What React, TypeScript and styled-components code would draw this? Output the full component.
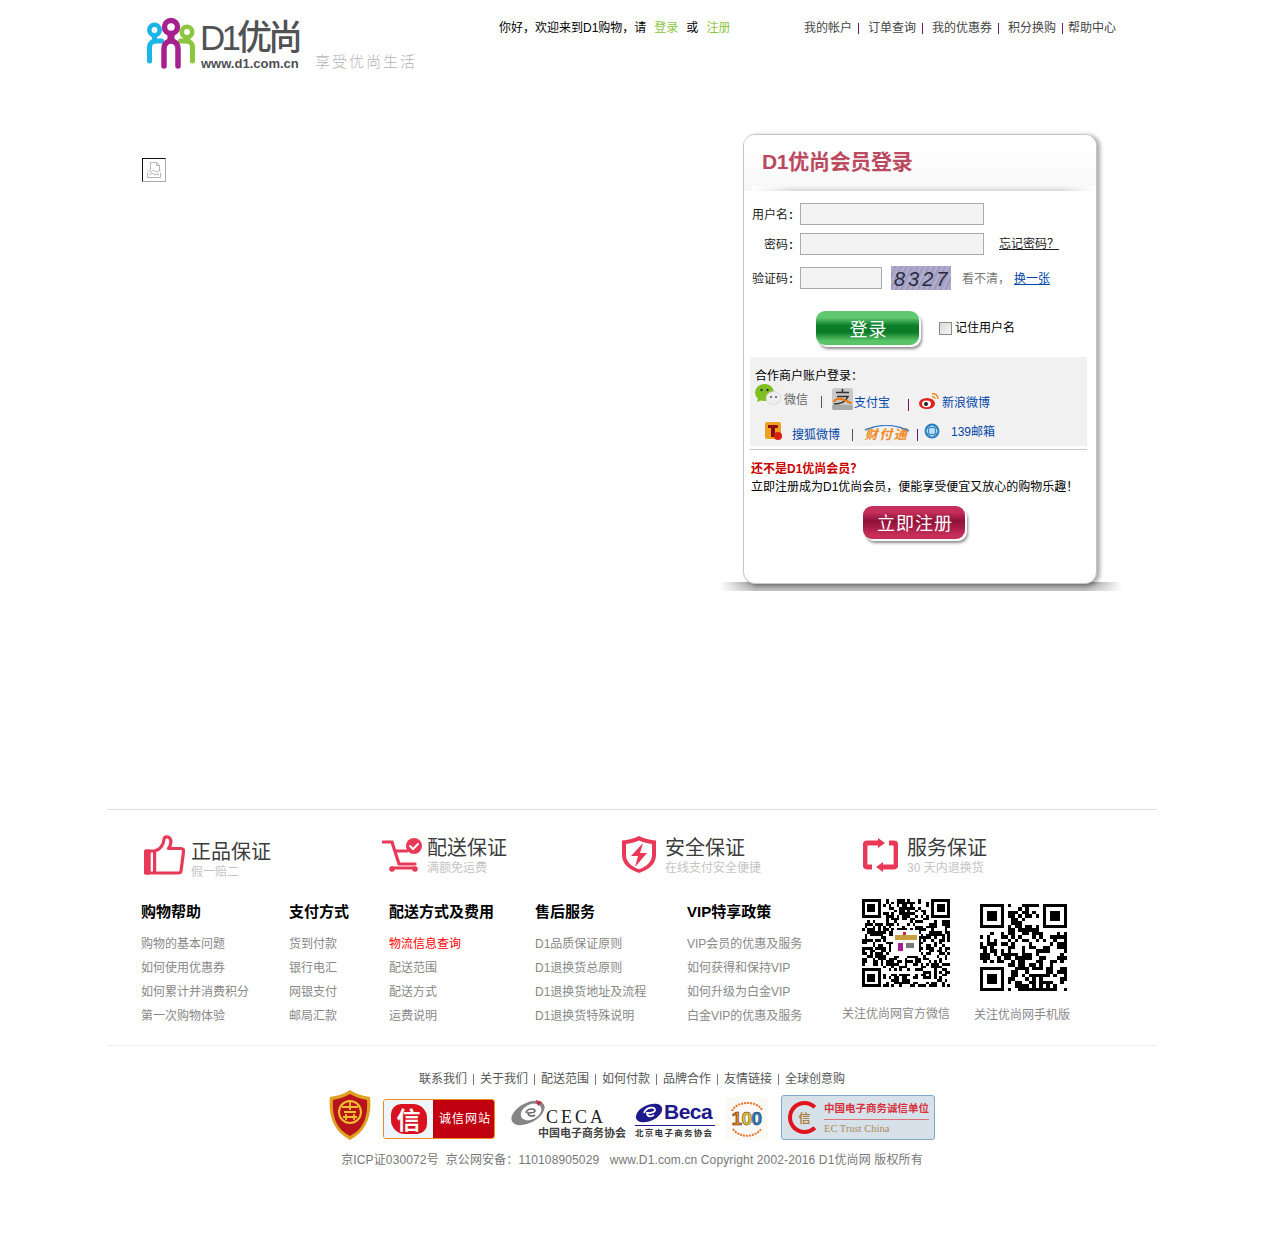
import React from "react";
import styled, { createGlobalStyle } from "styled-components";

const Global = createGlobalStyle`
  html, body { margin: 0; padding: 0; }
  body { font: 12px/14px "Liberation Sans", "Noto Sans CJK SC", sans-serif; color: #000; }
  a { text-decoration: none; color: inherit; }
`;

const Page = styled.div`
  width: 1050px;
  min-height: 1241px;
  margin-left: 107px;
`;

/* ---------- header ---------- */
const Header = styled.header`
  display: flex;
  align-items: flex-start;
  height: 134px;
  box-sizing: border-box;
  padding: 17px 0 0 39px;
`;
const LogoBlock = styled.div`
  display: flex;
  align-items: flex-start;
  width: 353px;
`;
const LogoWords = styled.div`
  display: flex;
  flex-direction: column;
  margin-left: 1px;
  width: 100px;
`;
const LogoName = styled.div`
  font-size: 35px;
  font-weight: 500;
  line-height: 36px;
  height: 36px;
  margin: 3px 0 0 -1px;
  letter-spacing: -3.9px;
  color: #505254;
  white-space: nowrap;
`;
const LogoUrl = styled.div`
  font-size: 13px;
  line-height: 14px;
  font-weight: 700;
  color: #4d4f52;
  margin-top: 1px;
  white-space: nowrap;
`;
const Slogan = styled.div`
  font-family: "Noto Sans CJK SC", sans-serif;
  font-weight: 300;
  font-size: 15px;
  line-height: 18px;
  letter-spacing: 2px;
  color: #b4b4b4;
  margin: 35px 0 0 14px;
  white-space: nowrap;
`;
const Greeting = styled.div`
  display: flex;
  width: 305px;
  margin-top: 4px;
  white-space: nowrap;
`;
const GreenLink = styled.a<{ $ml: number }>`
  color: #8cc63f;
  margin-left: ${(p) => p.$ml}px;
`;
const PlainWord = styled.span`
  margin-left: 8px;
`;
const AccountNav = styled.nav`
  display: flex;
  margin-top: 4px;
  color: #444;
  white-space: nowrap;
`;
const NavSep = styled.i<{ $w: number }>`
  width: 1px;
  height: 11px;
  margin: 2px ${(p) => p.$w}px 0 6px;
  background: #7a1468;
`;

/* ---------- main ---------- */
const Main = styled.main`
  display: flex;
  align-items: flex-start;
  height: 675px;
  padding-left: 35px;
`;
const BrokenImage = styled.div`
  width: 24px;
  height: 24px;
  box-sizing: border-box;
  margin-top: 24px;
  border: 1px solid;
  border-color: #111 #aaa #aaa #111;
  display: flex;
  align-items: center;
  justify-content: center;
`;
const Card = styled.section`
  position: relative;
  width: 354px;
  height: 450px;
  box-sizing: border-box;
  margin-left: 577px;
  background: #fff;
  border: 1px solid #c6c6c6;
  border-radius: 12px;
  box-shadow: 3px 1px 4px rgba(0, 0, 0, 0.35);
  &::before {
    content: "";
    position: absolute;
    z-index: -1;
    left: -24px;
    right: -26px;
    bottom: -8px;
    height: 9px;
    background:
      linear-gradient(90deg, #fff, rgba(255, 255, 255, 0) 9%, rgba(255, 255, 255, 0) 91%, #fff),
      linear-gradient(#8e8e8e, #c4c4c4);
  }
`;
const CardHead = styled.div`
  position: relative;
  height: 56px;
  box-sizing: border-box;
  padding: 14px 0 0 18px;
  border-radius: 11px 11px 0 0;
  background: linear-gradient(#fff 25%, #f7f7f7);
  &::after {
    content: "";
    position: absolute;
    left: 8px;
    right: 0;
    bottom: 0;
    height: 5px;
    background:
      linear-gradient(90deg, #fff, rgba(255, 255, 255, 0) 12%, rgba(255, 255, 255, 0) 90%, #fff),
      linear-gradient(#f5f5f5, #d9d9d9);
  }
`;
const CardTitle = styled.h1`
  margin: 0;
  font-size: 21px;
  line-height: 26px;
  font-weight: 700;
  letter-spacing: -0.3px;
  color: #bb4a60;
`;
const FormBody = styled.div`
  padding-top: 12px;
`;
const FormRow = styled.div<{ $mt?: number }>`
  display: flex;
  align-items: center;
  margin-top: ${(p) => p.$mt || 0}px;
`;
const FieldLabel = styled.label`
  width: 49px;
  margin-right: 7px;
  padding-top: 2px;
  text-align: right;
  color: #222;
  white-space: nowrap;
`;
const Colon = styled.b`
  margin-left: 1px;
`;
const TextField = styled.div<{ $w: number }>`
  width: ${(p) => p.$w}px;
  height: 22px;
  box-sizing: border-box;
  background: #f3f3f3;
  border: 1px solid #aaa;
`;
const Forgot = styled.a`
  margin-left: 15px;
  color: #222;
  text-decoration: underline;
`;
const Captcha = styled.div`
  width: 60px;
  height: 24px;
  margin-left: 9px;
  background: repeating-linear-gradient(115deg, #aaa6c8 0 2px, #b8b5d2 2px 3px, #a09cc0 3px 5px);
  font: italic 20px/26px "Liberation Sans", sans-serif;
  letter-spacing: 3px;
  padding-left: 3px;
  box-sizing: border-box;
  color: #2a2a40;
  overflow: hidden;
`;
const Muted = styled.span`
  color: #777;
  margin-left: 11px;
  padding-top: 1px;
`;
const BlueLink = styled.a`
  color: #0046a8;
  text-decoration: underline;
  margin-left: 4px;
  padding-top: 1px;
`;
const LoginRow = styled.div`
  display: flex;
  align-items: center;
  margin-top: 21px;
  padding-left: 72px;
`;
const GlossButton = styled.button<{ $tone: "green" | "red"; $h: number; $w: number }>`
  width: ${(p) => p.$w}px;
  height: ${(p) => p.$h}px;
  border: 0;
  padding: 0 0 0 2px;
  border-radius: 9px;
  color: #fff;
  font: 400 18px/${(p) => p.$h}px "Noto Sans CJK SC", sans-serif;
  letter-spacing: 1px;
  box-shadow: 2px 2px 0 #fff, 3px 4px 3px rgba(0, 0, 0, 0.45);
  background: ${(p) =>
    p.$tone === "green"
      ? "linear-gradient(#61c770 0 20%, #0d7f2a 42%, #0b7825 62%, #5ac568 88%)"
      : "linear-gradient(#c62f5b 0 18%, #8e1239 45%, #a31a45 62%, #c72e5a 88%)"};
`;
const RememberBox = styled.span`
  width: 11px;
  height: 11px;
  margin-left: 20px;
  border: 1px solid #8a8a8a;
  background: linear-gradient(135deg, #d8d8d8, #f6f6f6);
`;
const RememberText = styled.span`
  margin-left: 3px;
`;
const PartnerPanel = styled.div`
  margin: 12px 0 0 6px;
  width: 337px;
  height: 89px;
  box-sizing: border-box;
  padding-top: 12px;
  background: #f1f1f1;
`;
const PartnerTitle = styled.div`
  padding-left: 5px;
`;
const PartnerRow = styled.div<{ $pl: number; $h: number; $mt: number }>`
  display: flex;
  align-items: flex-start;
  height: ${(p) => p.$h}px;
  margin-top: ${(p) => p.$mt}px;
  padding-left: ${(p) => p.$pl}px;
`;
const Spot = styled.div<{ $ml?: number; $mt?: number; $w?: number }>`
  margin-left: ${(p) => p.$ml || 0}px;
  margin-top: ${(p) => p.$mt || 0}px;
  ${(p) => (p.$w ? `width:${p.$w}px;` : "")}
  line-height: 14px;
  white-space: nowrap;
  & > svg { display: block; }
`;
const PartnerText = styled(Spot)<{ $gray?: boolean }>`
  padding-top: 1px;
  color: ${(p) => (p.$gray ? "#666" : "#0046a8")};
`;
const PartnerSep = styled.i<{ $ml: number; $mt: number; $c: string }>`
  display: block;
  width: 1px;
  height: 12px;
  margin: ${(p) => p.$mt}px 0 0 ${(p) => p.$ml}px;
  background: ${(p) => p.$c};
`;
const TenpayMark = styled(Spot)`
  position: relative;
  width: 47px;
  height: 16px;
  font: italic 700 13px/17px "Noto Sans CJK SC", sans-serif;
  letter-spacing: 1.5px;
  color: #f08a24;
  text-align: center;
  & > svg { position: absolute; left: 0; top: 0; }
`;
const PanelRule = styled.hr`
  margin: 3px 0 0 6px;
  width: 337px;
  height: 1px;
  border: 0;
  background: #c8c8c8;
`;
const JoinTitle = styled.div`
  margin: 12px 0 0 7px;
  font-weight: 700;
  color: #c00;
`;
const JoinText = styled.div`
  margin: 4px 0 0 7px;
  white-space: nowrap;
`;
const JoinAction = styled.div`
  margin-top: 12px;
  padding-left: 119px;
`;

/* ---------- footer ---------- */
const Footer = styled.footer`
  border-top: 1px solid #dedede;
`;
const GuaranteeRow = styled.div`
  display: flex;
  align-items: flex-start;
  height: 89px;
  box-sizing: border-box;
  padding: 25px 0 0 37px;
`;
const Guarantee = styled.div<{ $w: number }>`
  display: flex;
  align-items: flex-start;
  width: ${(p) => p.$w}px;
`;
const GuaranteeIcon = styled.svg<{ $mt: number }>`
  flex: none;
  margin-top: ${(p) => p.$mt}px;
`;
const GuaranteeText = styled.div<{ $ml: number; $mt?: number }>`
  margin-left: ${(p) => p.$ml}px;
  margin-top: ${(p) => p.$mt || 0}px;
`;
const GuaranteeTitle = styled.div`
  font-size: 20px;
  line-height: 24px;
  color: #3c3c3c;
  white-space: nowrap;
  padding-top: 1px;
`;
const GuaranteeSub = styled.div`
  font-size: 12px;
  line-height: 16px;
  color: #c4c4c4;
  white-space: nowrap;
`;
const HelpRow = styled.div`
  display: flex;
  align-items: flex-start;
  height: 147px;
  box-sizing: border-box;
  padding-left: 34px;
  border-bottom: 1px solid #eee;
`;
const HelpColumn = styled.div<{ $w: number }>`
  width: ${(p) => p.$w}px;
  padding-top: 5px;
  flex: none;
`;
const HelpHead = styled.h3`
  margin: 0 0 12px;
  font-size: 15px;
  line-height: 16px;
  font-weight: 700;
  color: #000;
  white-space: nowrap;
`;
const HelpLink = styled.a<{ $hot?: boolean }>`
  display: block;
  line-height: 24px;
  color: ${(p) => (p.$hot ? "#f00" : "#888")};
  white-space: nowrap;
`;
const QrBlock = styled.div<{ $w: number; $qrLeft: number; $top: number; $gap: number }>`
  width: ${(p) => p.$w}px;
  flex: none;
  padding-top: ${(p) => p.$top}px;
  & > svg { display: block; margin: 0 0 ${(p) => p.$gap}px ${(p) => p.$qrLeft}px; }
`;
const QrCaption = styled.div`
  color: #888;
  white-space: nowrap;
`;
const LinkRow = styled.nav`
  display: flex;
  justify-content: center;
  margin-top: 26px;
  color: #555;
`;
const LinkSep = styled.i`
  width: 1px;
  height: 11px;
  margin: 2px 6px 0;
  background: #777;
`;
const BadgeRow = styled.div`
  display: flex;
  justify-content: center;
  align-items: flex-end;
  height: 50px;
  margin-top: 4px;
`;
const BadgeSvg = styled.svg<{ $ml?: number }>`
  flex: none;
  display: block;
  margin-left: ${(p) => p.$ml || 0}px;
`;
const TrustBadge = styled.div`
  display: flex;
  width: 112px;
  height: 40px;
  box-sizing: border-box;
  margin: 0 0 1px 12px;
  border: 1px solid #f08a24;
  border-radius: 3px;
  overflow: hidden;
`;
const TrustLeft = styled.div`
  width: 49px;
  background: #eef5fb;
  display: flex;
  align-items: center;
  justify-content: center;
`;
const TrustMark = styled.div`
  width: 36px;
  height: 30px;
  border-radius: 10px 14px 10px 14px;
  background: #d8121f;
  color: #fff;
  text-align: center;
  font: 700 24px/30px "Noto Sans CJK SC", sans-serif;
`;
const TrustRight = styled.div`
  flex: 1;
  background: #c00010;
  color: #fff;
  font-size: 12px;
  line-height: 38px;
  padding-left: 3px;
  text-align: center;
  letter-spacing: 1px;
  white-space: nowrap;
`;
const Association = styled.div<{ $w: number; $ml: number }>`
  width: ${(p) => p.$w}px;
  margin-left: ${(p) => p.$ml}px;
  flex: none;
`;
const CecaTop = styled.div`
  display: flex;
  align-items: flex-end;
  height: 27px;
`;
const CecaWord = styled.span`
  font: 18px/18px "Liberation Serif", serif;
  letter-spacing: 3px;
  color: #222;
  margin-left: -1px;
`;
const CecaCn = styled.div`
  font-size: 11px;
  line-height: 14px;
  font-weight: 700;
  color: #444;
  text-align: right;
  white-space: nowrap;
`;
const BecaTop = styled.div`
  display: flex;
  align-items: center;
  height: 26px;
  border-bottom: 1px solid #1c1a8c;
`;
const BecaWord = styled.span`
  font: 700 21px/24px "Liberation Sans", sans-serif;
  color: #1c1a8c;
  letter-spacing: -0.5px;
  margin-left: 1px;
`;
const BecaCn = styled.div`
  font-size: 8.5px;
  line-height: 14px;
  font-weight: 700;
  letter-spacing: 1.3px;
  color: #333;
  white-space: nowrap;
`;
const HundredBadge = styled.div`
  position: relative;
  width: 43px;
  height: 43px;
  margin-left: 10px;
  flex: none;
  background: #fbfaf6;
  border-radius: 4px;
  font: 900 19px/43px "Liberation Sans", sans-serif;
  letter-spacing: -0.5px;
  text-align: center;
  -webkit-text-stroke: 0.5px #222;
  & > svg { position: absolute; left: 0; top: 0; }
`;
const HundredDigit = styled.span<{ $c: string }>`
  position: relative;
  color: ${(p) => p.$c};
`;
const EcBadge = styled.div`
  display: flex;
  width: 154px;
  height: 45px;
  box-sizing: border-box;
  margin-left: 13px;
  flex: none;
  background: #d6e1ea;
  border: 1px solid #7fa9cb;
  border-radius: 3px;
  padding: 5px 0 0 6px;
`;
const EcRing = styled.div`
  width: 34px;
  height: 33px;
  box-sizing: border-box;
  border: 4px solid #e0141c;
  border-right-color: transparent;
  border-radius: 50%;
  color: #b08040;
  font: 700 12px/25px "Noto Sans CJK SC", sans-serif;
  text-align: center;
`;
const EcText = styled.div`
  margin-left: 3px;
  flex: 1;
  padding-right: 5px;
`;
const EcCn = styled.div`
  font-size: 10.5px;
  line-height: 15px;
  font-weight: 700;
  color: #d8323c;
  white-space: nowrap;
  border-bottom: 1px solid #e0707a;
  padding-bottom: 3px;
`;
const EcEn = styled.div`
  font: 10.5px/14px "Liberation Serif", serif;
  color: #b08a58;
  margin-top: 2px;
`;
const Copyright = styled.div`
  margin-top: 13px;
  text-align: center;
  color: #777;
  letter-spacing: 0.13px;
  white-space: pre;
`;

/* ---------- drawings ---------- */
const LogoMark = () => (
  <svg width="54" height="54" viewBox="0 0 54 54" fill="none" strokeLinecap="round">
    <circle cx="8.500" cy="13" r="5.200" stroke="#1cb5e8" strokeWidth="4.600" />
    <path d="M3.500 44V30a6 6 0 0 1 6-6h6" stroke="#1cb5e8" strokeWidth="5" />
    <path d="M8.500 19v5" stroke="#1cb5e8" strokeWidth="5" />
    <circle cx="41" cy="15" r="5.200" stroke="#8cc63f" strokeWidth="4.600" />
    <path d="M46.500 44V30a6 6 0 0 0-6-6h-6" stroke="#8cc63f" strokeWidth="5" />
    <path d="M41 21v3" stroke="#8cc63f" strokeWidth="5" />
    <circle cx="25" cy="10" r="6.500" stroke="#a6208e" strokeWidth="5.500" />
    <path d="M18 49V31a7 7 0 0 1 14 0v18" stroke="#a6208e" strokeWidth="5.500" />
    <path d="M25 18v5" stroke="#a6208e" strokeWidth="7" />
  </svg>
);

const BrokenGlyph = () => (
  <svg width="14" height="16" viewBox="0 0 14 16" fill="none" stroke="#b5b5b5">
    <path d="M3.500 8V.5h6l3 3V8M9.500.5v3h3" />
    <path d="M.5 8l3 2 3-2 3 2 4-2M.5 10.500v5h13v-5" />
    <path d="M2 13l3-2 3 2 2-1 2 1" />
  </svg>
);

const Wechat = () => (
  <svg width="26" height="22" viewBox="0 0 26 22">
    <ellipse cx="9.500" cy="8.500" rx="9.500" ry="8.500" fill="#7fbf1e" />
    <path d="M3 14l-1 4 5-2z" fill="#7fbf1e" />
    <circle cx="6.500" cy="6" r="1.200" fill="#234" />
    <circle cx="12.500" cy="6" r="1.200" fill="#234" />
    <ellipse cx="18.500" cy="14" rx="7.500" ry="6.500" fill="#eeeeee" stroke="#ccc" strokeWidth=".6" />
    <circle cx="16" cy="13" r="1" fill="#555" />
    <circle cx="21" cy="13" r="1" fill="#555" />
  </svg>
);
const Alipay = () => (
  <svg width="21" height="22" viewBox="0 0 21 22">
    <rect width="21" height="22" rx="3" fill="#c9c9c9" />
    <rect y="17" width="21" height="5" rx="2" fill="#a9a9a9" />
    <path d="M4 4.500h13M10.500 1v4M5 8.500h11C14 13 9 16 2 16" fill="none" stroke="#333" strokeWidth="1.600" />
    <path d="M1.500 14c3-5 8-4 18 1.500" fill="none" stroke="#ee7a10" strokeWidth="2" />
  </svg>
);
const Weibo = () => (
  <svg width="20" height="16" viewBox="0 0 20 16">
    <ellipse cx="8" cy="10.500" rx="8" ry="5.500" fill="#dd2222" />
    <ellipse cx="7.500" cy="10.800" rx="4.500" ry="3.400" fill="#fff" />
    <circle cx="7" cy="11" r="2" fill="#222" />
    <path d="M13 1c3-1 6 1 6 5M13 4c2-.5 3 .5 3 2" fill="none" stroke="#f08a24" strokeWidth="1.500" />
  </svg>
);
const Sohu = () => (
  <svg width="18" height="18" viewBox="0 0 18 18">
    <rect width="16" height="17" rx="2" fill="#f0a020" />
    <path d="M3 3h10v3H10v9H6V6H3z" fill="#8a1010" />
    <circle cx="13" cy="14" r="4" fill="#d82010" />
  </svg>
);
const TenpaySwoosh = () => (
  <svg width="47" height="16" viewBox="0 0 47 16" fill="none">
    <path d="M2 5C16 -1 32 -1 46 6" stroke="#3b7fc4" strokeWidth="1.400" />
  </svg>
);
const Mobile139 = () => (
  <svg width="16" height="16" viewBox="0 0 16 16" fill="none">
    <circle cx="8" cy="8" r="7.500" fill="#2a7fc0" />
    <circle cx="8" cy="8" r="5.500" fill="#bcdcf2" />
    <path d="M3 6c3-2 7-2 10 0M3 10c3 2 7 2 10 0M6 3c-2 3-2 7 0 10M10 3c2 3 2 7 0 10" stroke="#2a7fc0" />
  </svg>
);

const Thumb = () => (
  <GuaranteeIcon $mt={0} width="41" height="40" viewBox="0 0 41 40" fill="none" stroke="#e83a58" strokeWidth="3.200" strokeLinejoin="round">
    <rect x="1.600" y="16" width="9" height="22" rx="1" />
    <path d="M1.600 16h3.500v22H1.600z" fill="#e83a58" />
    <path d="M10.600 16c5-1 9-6 9.400-11.500C20.200 1.500 24 .8 26 3.500c1.800 3 .5 7-1.500 10H37c2 0 2.800 1.500 2.500 3.500L37 36c-.3 1.300-1 2-2.500 2H10.600" />
  </GuaranteeIcon>
);
const Cart = () => (
  <GuaranteeIcon $mt={2} width="40" height="36" viewBox="0 0 40 36" fill="none" stroke="#e83a58" strokeWidth="3.200" strokeLinecap="round">
    <path d="M1 5h9l7 22h16M13 14h12M10 31h22" />
    <circle cx="10" cy="32" r="2.800" fill="#e83a58" stroke="none" />
    <circle cx="33" cy="32" r="2.800" fill="#e83a58" stroke="none" />
    <circle cx="32" cy="9" r="8" fill="#e83a58" stroke="none" />
    <path d="M28 9l3 3 5-5" stroke="#fff" strokeWidth="2" />
  </GuaranteeIcon>
);
const Shield = () => (
  <GuaranteeIcon $mt={1} width="34" height="37" viewBox="0 0 34 37">
    <path d="M17 0c5 2.500 11 4 17 4.500V19c0 9-7 14.500-17 18C7 33.500 0 28 0 19V4.500C6 4 12 2.500 17 0z" fill="#e83a58" />
    <path d="M17 4.500c4 1.800 9 3 13 3.500v11c0 7-5.500 11.500-13 14.300C9.500 30.500 4 26 4 19V8c4-.5 9-1.700 13-3.500z" fill="#fff" />
    <path d="M21 7L9 20h7l-3 11 12-14h-7z" fill="#e83a58" />
  </GuaranteeIcon>
);
const Service = () => (
  <GuaranteeIcon $mt={3} width="35" height="34" viewBox="0 0 35 34">
    <path d="M15 5H4Q2 5 2 7.500v19Q2 29 4 29h5" fill="none" stroke="#e83a58" strokeWidth="4.800" />
    <path d="M20 29h11q2 0 2-2.500v-19Q33 5 31 5h-5" fill="none" stroke="#e83a58" strokeWidth="4.800" />
    <path d="M15 0l7 5-7 5zM20 24l-7 5 7 5z" fill="#e83a58" />
  </GuaranteeIcon>
);

/* Module pattern is derived from a small generator so both codes stay stable between renders. */
const QrCode = ({ n, px, seed, logo }: { n: number; px: number; seed: number; logo?: boolean }) => {
  let s = seed;
  const rnd = () => {
    s = (s * 1103515245 + 12345) & 0x7fffffff;
    return (s >> 16) & 1;
  };
  const inFinder = (x: number, y: number) =>
    (x < 8 && y < 8) || (x >= n - 8 && y < 8) || (x < 8 && y >= n - 8);
  const cells: string[] = [];
  for (let y = 0; y < n; y++)
    for (let x = 0; x < n; x++) {
      const on = rnd();
      if (on && !inFinder(x, y)) cells.push(`M${x} ${y}h1v1h-1z`);
    }
  const finder = (x: number, y: number) =>
    `M${x} ${y}h7v7h-7zM${x + 1} ${y + 1}v5h5v-5zM${x + 2} ${y + 2}h3v3h-3z`;
  const c = (n - 8) / 2;
  return (
    <svg width={px} height={px} viewBox={`0 0 ${n} ${n}`} shapeRendering="crispEdges">
      <path d={cells.join("")} fill="#000" />
      <path d={finder(0, 0) + finder(n - 7, 0) + finder(0, n - 7)} fill="#000" fillRule="evenodd" />
      {logo && (
        <g>
          <rect x={c - 1} y={c - 1} width="10" height="10" fill="#fff" />
          <rect x={c} y={c + 1} width="8" height="2" fill="#c9a040" />
          <rect x={c + 1} y={c + 4} width="2" height="3" fill="#a6208e" />
          <rect x={c + 4} y={c + 4} width="3" height="2" fill="#777" />
          <rect x={c + 3} y={c} width="1" height="1" fill="#c8283c" />
        </g>
      )}
    </svg>
  );
};

const GoldShield = () => (
  <BadgeSvg width="42" height="50" viewBox="0 0 42 50">
    <path d="M21 0c6 4 13 6 20 7 2 18-3 34-20 43C4 41-1 25 1 7c7-1 14-3 20-7z" fill="#e0a020" />
    <path d="M21 4c5 3 11 5 17 6 1 16-3 29-17 36C7 39 3 26 4 10c6-1 12-3 17-6z" fill="#b8141c" />
    <circle cx="21" cy="22" r="11" fill="none" stroke="#f0c030" strokeWidth="2" />
    <path d="M13 17h16M21 12v8M15 22h12M14 27h14M17 24v6M25 24v6" stroke="#f0c030" strokeWidth="1.800" fill="none" />
  </BadgeSvg>
);
const CecaSwirl = () => (
  <svg width="37" height="27" viewBox="0 0 37 27">
    <ellipse cx="18" cy="14" rx="18" ry="10" transform="rotate(-28 18 14)" fill="#858585" />
    <ellipse cx="21" cy="13" rx="11" ry="7.500" transform="rotate(-28 21 13)" fill="#fff" />
    <path d="M16 14c1-5 9-5 9-2 0 2-5 2-7 2 0 3 4 4 7 2" fill="none" stroke="#666" strokeWidth="1.600" />
    <path d="M26 1l6 2-4 4z" fill="#c8283c" />
  </svg>
);
const BecaSwirl = () => (
  <svg width="28" height="25" viewBox="0 0 28 25">
    <ellipse cx="14" cy="13" rx="14" ry="8" transform="rotate(-25 14 13)" fill="#1c1a8c" />
    <path d="M9 13c2-6 11-7 11-3 0 3-7 3-8 3 0 4 4 4 7 2" fill="none" stroke="#fff" strokeWidth="1.800" />
  </svg>
);
const HundredArc = () => (
  <svg width="43" height="43" viewBox="0 0 43 43" fill="none">
    <path d="M7 14C11 4 32 3 37 13M8 32c6 9 22 9 28 0" stroke="#e8702a" strokeWidth="2" strokeDasharray="2 1" />
  </svg>
);

const colA = ["购物的基本问题", "如何使用优惠券", "如何累计并消费积分", "第一次购物体验"];
const colB = ["货到付款", "银行电汇", "网银支付", "邮局汇款"];
const colC = ["物流信息查询", "配送范围", "配送方式", "运费说明"];
const colD = ["D1品质保证原则", "D1退换货总原则", "D1退换货地址及流程", "D1退换货特殊说明"];
const colE = ["VIP会员的优惠及服务", "如何获得和保持VIP", "如何升级为白金VIP", "白金VIP的优惠及服务"];
const bottomLinks = ["联系我们", "关于我们", "配送范围", "如何付款", "品牌合作", "友情链接", "全球创意购"];

const HelpCol = ({ w, head, items, hot }: { w: number; head: string; items: string[]; hot?: number }) => (
  <HelpColumn $w={w}>
    <HelpHead>{head}</HelpHead>
    {items.map((t, i) => (
      <HelpLink key={t} $hot={hot === i}>
        {t}
      </HelpLink>
    ))}
  </HelpColumn>
);

export default function App() {
  return (
    <Page>
      <Global />
      <Header>
        <LogoBlock>
          <LogoMark />
          <LogoWords>
            <LogoName>D1优尚</LogoName>
            <LogoUrl>www.d1.com.cn</LogoUrl>
          </LogoWords>
          <Slogan>享受优尚生活</Slogan>
        </LogoBlock>
        <Greeting>
          你好，欢迎来到D1购物，请
          <GreenLink $ml={8}>登录</GreenLink>
          <PlainWord>或</PlainWord>
          <GreenLink $ml={8}>注册</GreenLink>
        </Greeting>
        <AccountNav>
          我的帐户<NavSep $w={9} />
          订单查询<NavSep $w={9} />
          我的优惠券<NavSep $w={9} />
          积分换购<NavSep $w={5} />
          帮助中心
        </AccountNav>
      </Header>

      <Main>
        <BrokenImage>
          <BrokenGlyph />
        </BrokenImage>
        <Card>
          <CardHead>
            <CardTitle>D1优尚会员登录</CardTitle>
          </CardHead>
          <FormBody>
            <FormRow>
              <FieldLabel>用户名<Colon>:</Colon></FieldLabel>
              <TextField $w={184} />
            </FormRow>
            <FormRow $mt={8}>
              <FieldLabel>密码<Colon>:</Colon></FieldLabel>
              <TextField $w={184} />
              <Forgot>忘记密码？</Forgot>
            </FormRow>
            <FormRow $mt={11}>
              <FieldLabel>验证码<Colon>:</Colon></FieldLabel>
              <TextField $w={82} />
              <Captcha>8327</Captcha>
              <Muted>看不清，</Muted>
              <BlueLink>换一张</BlueLink>
            </FormRow>
            <LoginRow>
              <GlossButton $tone="green" $w={103} $h={34}>登录</GlossButton>
              <RememberBox />
              <RememberText>记住用户名</RememberText>
            </LoginRow>
          </FormBody>
          <PartnerPanel>
            <PartnerTitle>合作商户账户登录：</PartnerTitle>
            <PartnerRow $pl={5} $h={26} $mt={1}>
              <Spot><Wechat /></Spot>
              <PartnerText $gray $ml={3} $mt={8}>微信</PartnerText>
              <PartnerSep $ml={13} $mt={12} $c="#555" />
              <Spot $ml={10} $mt={4}><Alipay /></Spot>
              <PartnerText $ml={1} $mt={11}>支付宝</PartnerText>
              <PartnerSep $ml={18} $mt={15} $c="#7a1468" />
              <Spot $ml={10} $mt={9}><Weibo /></Spot>
              <PartnerText $ml={3} $mt={11}>新浪微博</PartnerText>
            </PartnerRow>
            <PartnerRow $pl={15} $h={22} $mt={10}>
              <Spot $mt={2}><Sohu /></Spot>
              <PartnerText $ml={9} $mt={7}>搜狐微博</PartnerText>
              <PartnerSep $ml={12} $mt={9} $c="#555" />
              <TenpayMark $ml={10} $mt={5}><TenpaySwoosh />财付通</TenpayMark>
              <PartnerSep $ml={7} $mt={9} $c="#7a1468" />
              <Spot $ml={6} $mt={3}><Mobile139 /></Spot>
              <PartnerText $ml={11} $mt={4}>139邮箱</PartnerText>
            </PartnerRow>
          </PartnerPanel>
          <PanelRule />
          <JoinTitle>还不是D1优尚会员？</JoinTitle>
          <JoinText>立即注册成为D1优尚会员，便能享受便宜又放心的购物乐趣！</JoinText>
          <JoinAction>
            <GlossButton $tone="red" $w={102} $h={33}>立即注册</GlossButton>
          </JoinAction>
        </Card>
      </Main>

      <Footer>
        <GuaranteeRow>
          <Guarantee $w={238}>
            <Thumb />
            <GuaranteeText $ml={6} $mt={4}>
              <GuaranteeTitle>正品保证</GuaranteeTitle>
              <GuaranteeSub>假一赔二</GuaranteeSub>
            </GuaranteeText>
          </Guarantee>
          <Guarantee $w={240}>
            <Cart />
            <GuaranteeText $ml={5}>
              <GuaranteeTitle>配送保证</GuaranteeTitle>
              <GuaranteeSub>满额免运费</GuaranteeSub>
            </GuaranteeText>
          </Guarantee>
          <Guarantee $w={241}>
            <Shield />
            <GuaranteeText $ml={9}>
              <GuaranteeTitle>安全保证</GuaranteeTitle>
              <GuaranteeSub>在线支付安全便捷</GuaranteeSub>
            </GuaranteeText>
          </Guarantee>
          <Guarantee $w={200}>
            <Service />
            <GuaranteeText $ml={9}>
              <GuaranteeTitle>服务保证</GuaranteeTitle>
              <GuaranteeSub>30 天内退换货</GuaranteeSub>
            </GuaranteeText>
          </Guarantee>
        </GuaranteeRow>

        <HelpRow>
          <HelpCol w={148} head="购物帮助" items={colA} />
          <HelpCol w={100} head="支付方式" items={colB} />
          <HelpCol w={146} head="配送方式及费用" items={colC} hot={0} />
          <HelpCol w={152} head="售后服务" items={colD} />
          <HelpCol w={155} head="VIP特享政策" items={colE} />
          <QrBlock $w={132} $qrLeft={20} $top={0} $gap={20}>
            <QrCode n={33} px={88} seed={77} logo />
            <QrCaption>关注优尚网官方微信</QrCaption>
          </QrBlock>
          <QrBlock $w={100} $qrLeft={6} $top={5} $gap={17}>
            <QrCode n={25} px={87} seed={4242} />
            <QrCaption>关注优尚网手机版</QrCaption>
          </QrBlock>
        </HelpRow>

        <LinkRow>
          {bottomLinks.map((t, i) => (
            <React.Fragment key={t}>
              {i > 0 && <LinkSep />}
              <a>{t}</a>
            </React.Fragment>
          ))}
        </LinkRow>

        <BadgeRow>
          <GoldShield />
          <TrustBadge>
            <TrustLeft>
              <TrustMark>信</TrustMark>
            </TrustLeft>
            <TrustRight>诚信网站</TrustRight>
          </TrustBadge>
          <Association $w={116} $ml={15}>
            <CecaTop>
              <CecaSwirl />
              <CecaWord>CECA</CecaWord>
            </CecaTop>
            <CecaCn>中国电子商务协会</CecaCn>
          </Association>
          <Association $w={80} $ml={9}>
            <BecaTop>
              <BecaSwirl />
              <BecaWord>Beca</BecaWord>
            </BecaTop>
            <BecaCn>北京电子商务协会</BecaCn>
          </Association>
          <HundredBadge>
            <HundredArc />
            <HundredDigit $c="#f08020">1</HundredDigit>
            <HundredDigit $c="#f6c820">0</HundredDigit>
            <HundredDigit $c="#2a80d0">0</HundredDigit>
          </HundredBadge>
          <EcBadge>
            <EcRing>信</EcRing>
            <EcText>
              <EcCn>中国电子商务诚信单位</EcCn>
              <EcEn>EC Trust China</EcEn>
            </EcText>
          </EcBadge>
        </BadgeRow>

        <Copyright>京ICP证030072号  京公网安备：110108905029   www.D1.com.cn Copyright 2002-2016 D1优尚网 版权所有</Copyright>
      </Footer>
    </Page>
  );
}
